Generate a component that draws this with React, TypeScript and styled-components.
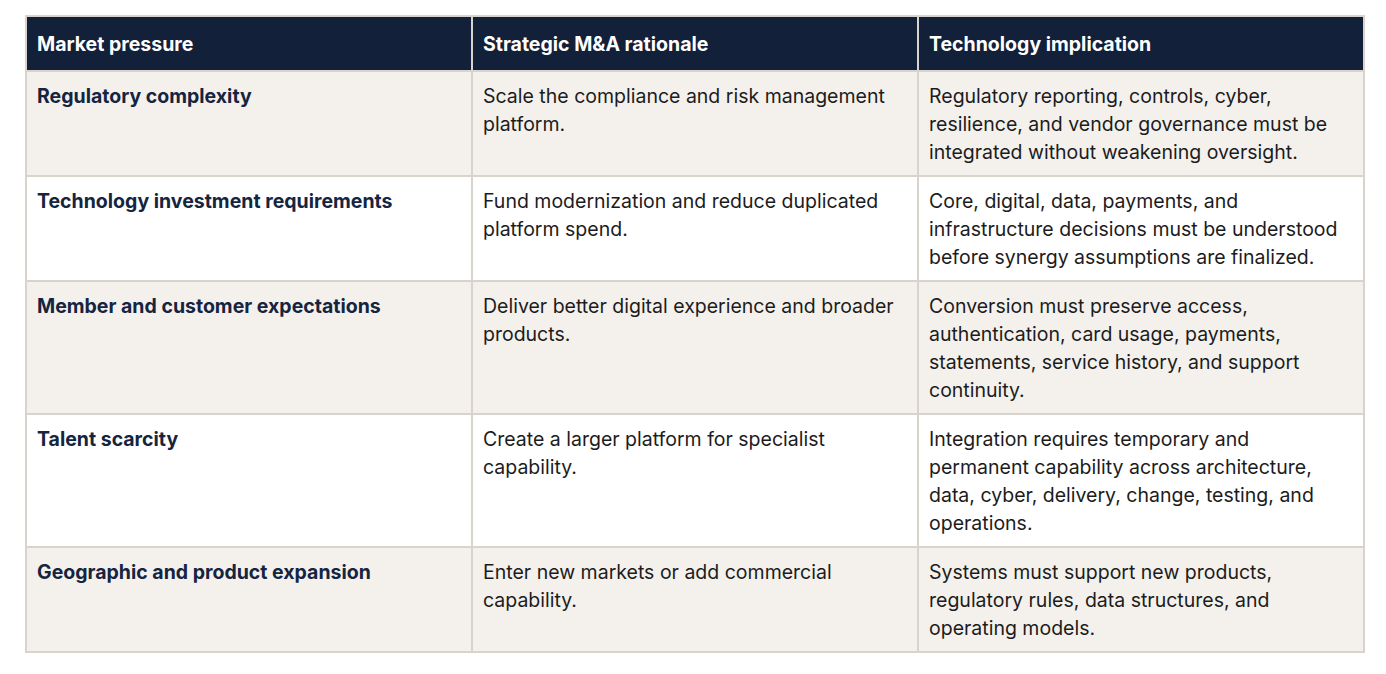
import React from "react";
import styled, { createGlobalStyle } from "styled-components";

const GlobalStyle = createGlobalStyle`
  html, body { margin: 0; padding: 0; background: #ffffff; }
  * { box-sizing: border-box; }
`;

const Page = styled.div`
  padding: 15px 0 0 25px;
  font-family: "Inter", "Noto Sans", sans-serif;
`;

const Grid = styled.div`
  display: grid;
  grid-template-columns: repeat(3, 1fr);
  width: 1340px;
  border-top: 2px solid #d8d3cc;
  border-left: 2px solid #d8d3cc;
`;

const Cell = styled.div<{ $shade?: boolean }>`
  border-right: 2px solid #d8d3cc;
  border-bottom: 2px solid #d8d3cc;
  padding: 10px 10px 9px;
  font-size: 19.5px;
  line-height: 28px;
  color: #1c1c1c;
  background: ${(p) => (p.$shade ? "#f4f1ed" : "#ffffff")};
`;

const HeadCell = styled(Cell)`
  background: #12203a;
  color: #ffffff;
  font-weight: 700;
  padding: 13px 10px 12px;
`;

const LabelCell = styled(Cell)`
  font-weight: 700;
  color: #15243f;
`;

const rows = [
  [
    "Regulatory complexity",
    "Scale the compliance and risk management platform.",
    "Regulatory reporting, controls, cyber, resilience, and vendor governance must be integrated without weakening oversight.",
  ],
  [
    "Technology investment requirements",
    "Fund modernization and reduce duplicated platform spend.",
    "Core, digital, data, payments, and infrastructure decisions must be understood before synergy assumptions are finalized.",
  ],
  [
    "Member and customer expectations",
    "Deliver better digital experience and broader products.",
    "Conversion must preserve access, authentication, card usage, payments, statements, service history, and support continuity.",
  ],
  [
    "Talent scarcity",
    "Create a larger platform for specialist capability.",
    "Integration requires temporary and permanent capability across architecture, data, cyber, delivery, change, testing, and operations.",
  ],
  [
    "Geographic and product expansion",
    "Enter new markets or add commercial capability.",
    "Systems must support new products, regulatory rules, data structures, and operating models.",
  ],
];

export default function App() {
  return (
    <Page>
      <GlobalStyle />
      <Grid>
        <HeadCell>Market pressure</HeadCell>
        <HeadCell>Strategic M&amp;A rationale</HeadCell>
        <HeadCell>Technology implication</HeadCell>
        {rows.map((r, i) => (
          <React.Fragment key={i}>
            <LabelCell $shade={i % 2 === 0}>{r[0]}</LabelCell>
            <Cell $shade={i % 2 === 0}>{r[1]}</Cell>
            <Cell $shade={i % 2 === 0}>{r[2]}</Cell>
          </React.Fragment>
        ))}
      </Grid>
    </Page>
  );
}
